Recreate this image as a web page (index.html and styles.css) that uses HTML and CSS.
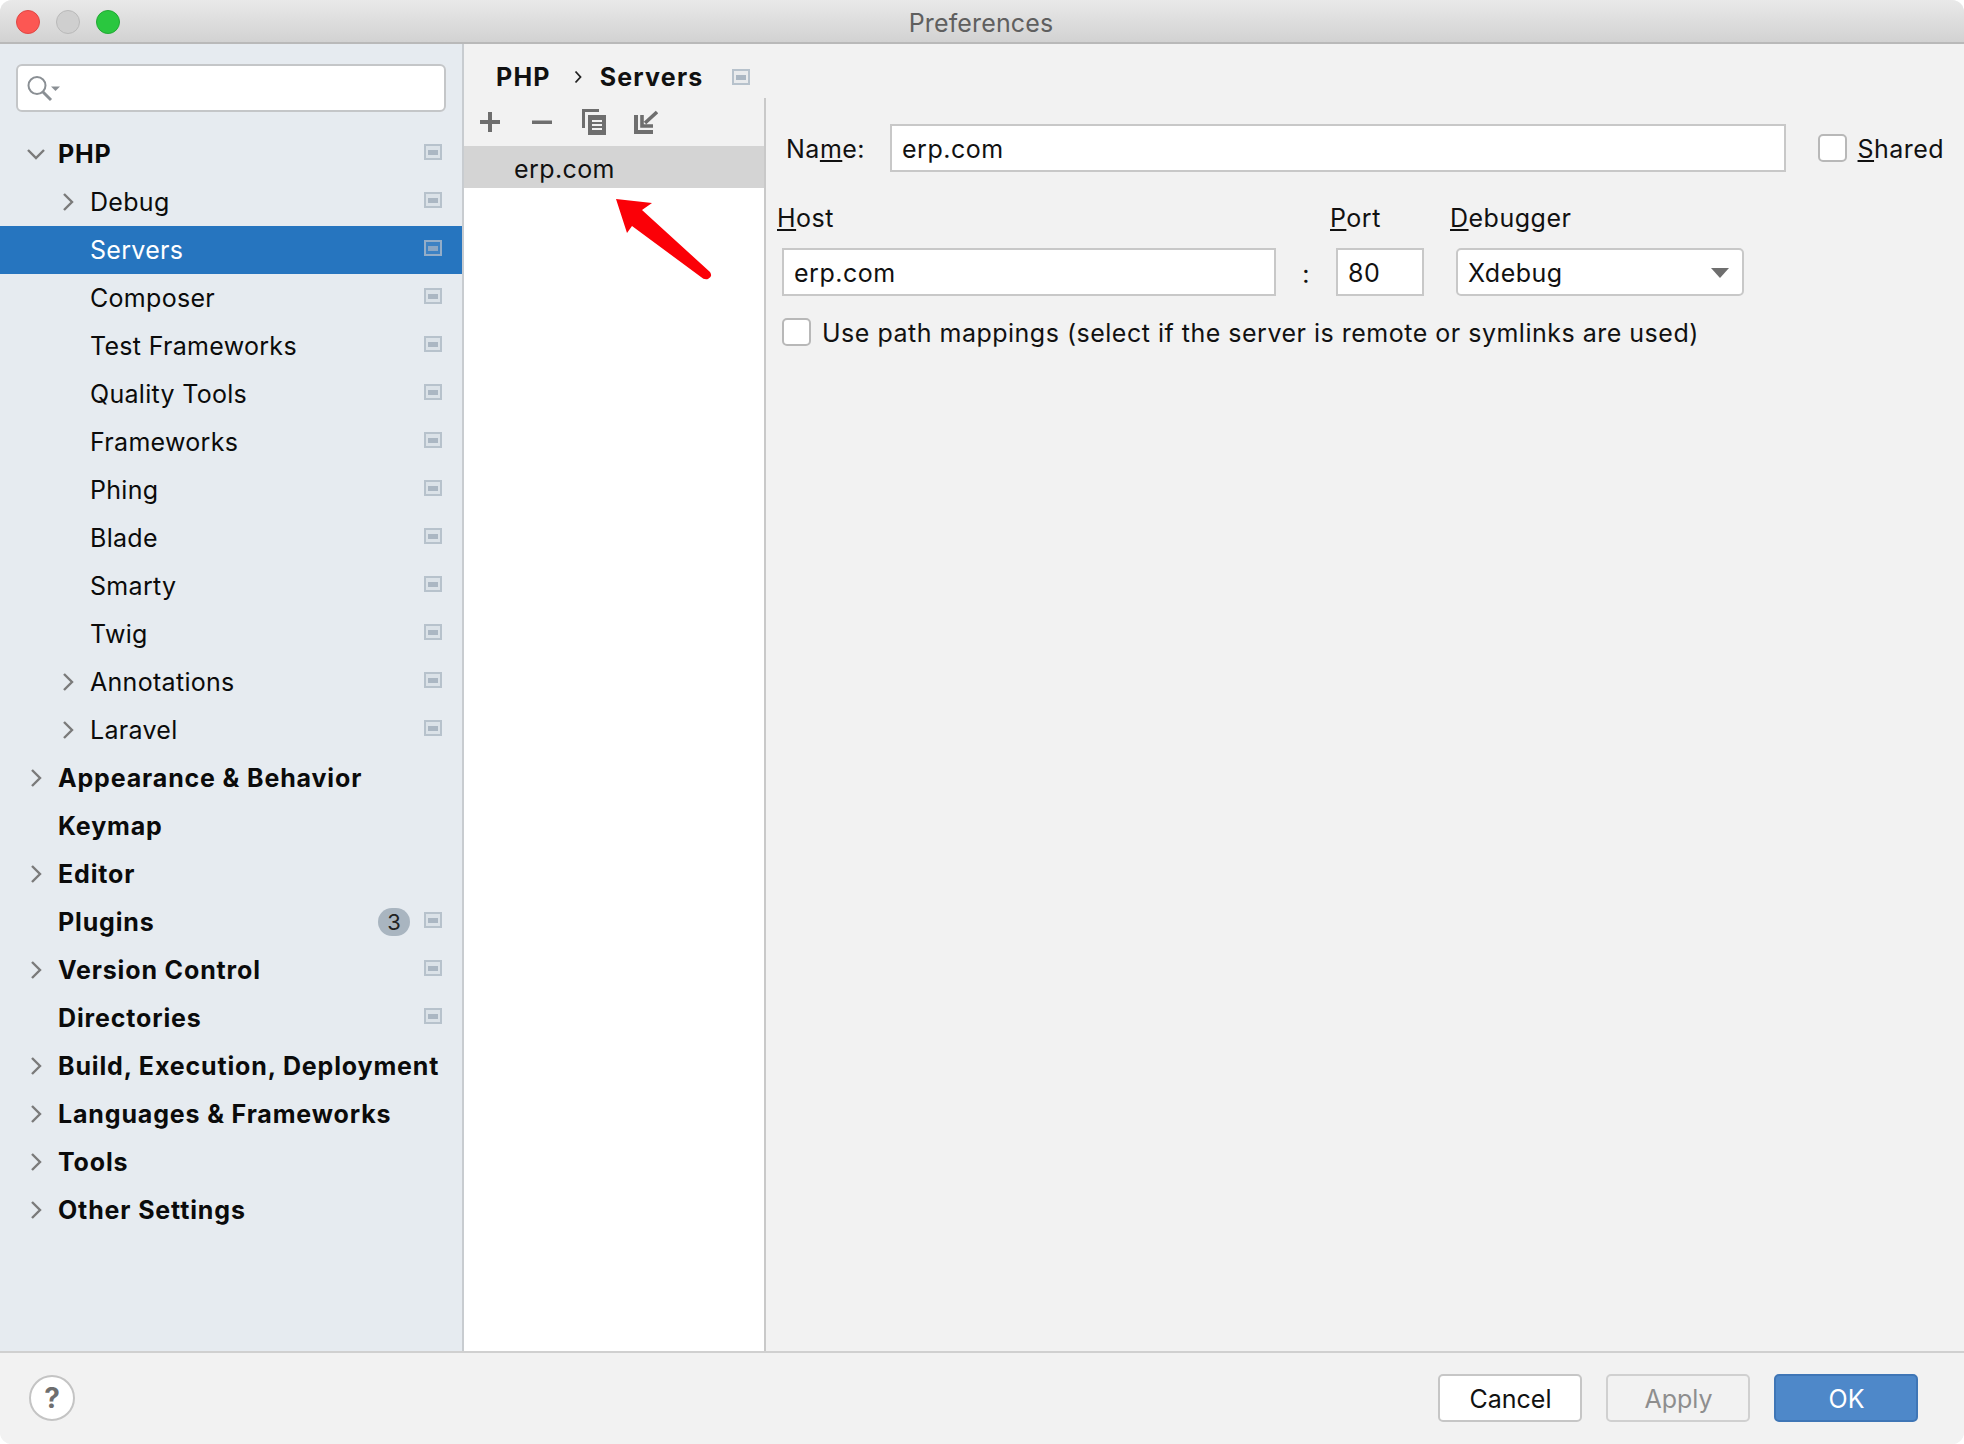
FILE: index.html
```html
<!DOCTYPE html>
<html lang="en">
<head>
<meta charset="utf-8">
<title>Preferences</title>
<link rel="stylesheet" href="styles.css">
</head>
<body>
<div class="window">
  <header class="titlebar">
    <div class="lights"><span class="light red"></span><span class="light grey"></span><span class="light green"></span></div>
    <div class="title">Preferences</div>
  </header>
  <div class="content">
    <aside class="sidebar">
      <div class="search">
        <svg class="search-icon" width="34" height="32" viewBox="0 0 34 32"><circle cx="10" cy="11.500" r="8.500" fill="none" stroke="#8a8f94" stroke-width="2"/><path d="M16 18l8 8" stroke="#8a8f94" stroke-width="3" fill="none"/><path d="M24 12.500h9l-4.500 4.500z" fill="#8a8f94"/></svg>
      </div>
      <nav class="tree">
        <div class="row top"><svg class="chev" viewBox="0 0 24 24"><path d="M4 8l8 8 8-8"/></svg><span class="label">PHP</span><i class="pi"></i></div>
        <div class="row sub"><svg class="chev" viewBox="0 0 24 24"><path d="M8 4l8 8-8 8"/></svg><span class="label">Debug</span><i class="pi"></i></div>
        <div class="row sub selected"><span class="chev"></span><span class="label">Servers</span><i class="pi"></i></div>
        <div class="row sub"><span class="chev"></span><span class="label">Composer</span><i class="pi"></i></div>
        <div class="row sub"><span class="chev"></span><span class="label">Test Frameworks</span><i class="pi"></i></div>
        <div class="row sub"><span class="chev"></span><span class="label">Quality Tools</span><i class="pi"></i></div>
        <div class="row sub"><span class="chev"></span><span class="label">Frameworks</span><i class="pi"></i></div>
        <div class="row sub"><span class="chev"></span><span class="label">Phing</span><i class="pi"></i></div>
        <div class="row sub"><span class="chev"></span><span class="label">Blade</span><i class="pi"></i></div>
        <div class="row sub"><span class="chev"></span><span class="label">Smarty</span><i class="pi"></i></div>
        <div class="row sub"><span class="chev"></span><span class="label">Twig</span><i class="pi"></i></div>
        <div class="row sub"><svg class="chev" viewBox="0 0 24 24"><path d="M8 4l8 8-8 8"/></svg><span class="label">Annotations</span><i class="pi"></i></div>
        <div class="row sub"><svg class="chev" viewBox="0 0 24 24"><path d="M8 4l8 8-8 8"/></svg><span class="label">Laravel</span><i class="pi"></i></div>
        <div class="row top"><svg class="chev" viewBox="0 0 24 24"><path d="M8 4l8 8-8 8"/></svg><span class="label">Appearance &amp; Behavior</span></div>
        <div class="row top"><span class="chev"></span><span class="label">Keymap</span></div>
        <div class="row top"><svg class="chev" viewBox="0 0 24 24"><path d="M8 4l8 8-8 8"/></svg><span class="label">Editor</span></div>
        <div class="row top"><span class="chev"></span><span class="label">Plugins</span><span class="badge">3</span><i class="pi"></i></div>
        <div class="row top"><svg class="chev" viewBox="0 0 24 24"><path d="M8 4l8 8-8 8"/></svg><span class="label">Version Control</span><i class="pi"></i></div>
        <div class="row top"><span class="chev"></span><span class="label">Directories</span><i class="pi"></i></div>
        <div class="row top"><svg class="chev" viewBox="0 0 24 24"><path d="M8 4l8 8-8 8"/></svg><span class="label">Build, Execution, Deployment</span></div>
        <div class="row top"><svg class="chev" viewBox="0 0 24 24"><path d="M8 4l8 8-8 8"/></svg><span class="label">Languages &amp; Frameworks</span></div>
        <div class="row top"><svg class="chev" viewBox="0 0 24 24"><path d="M8 4l8 8-8 8"/></svg><span class="label">Tools</span></div>
        <div class="row top"><svg class="chev" viewBox="0 0 24 24"><path d="M8 4l8 8-8 8"/></svg><span class="label">Other Settings</span></div>
      </nav>
    </aside>
    <main class="main">
      <div class="crumbs">
        <span class="crumb">PHP</span>
        <svg class="crumb-sep" width="8" height="14" viewBox="0 0 8 14"><path d="M1.500 1.500L6.500 7l-5 5.500" fill="none" stroke="#222" stroke-width="1.800"/></svg>
        <span class="crumb">Servers</span>
        <i class="pi crumb-pi"></i>
      </div>
      <div class="split">
        <section class="servers">
          <div class="toolbar">
            <svg class="tool" width="24" height="24" viewBox="0 0 24 24"><path d="M10 2h4v8h8v4h-8v8h-4v-8H2v-4h8z" fill="#6e6e6e"/></svg>
            <svg class="tool" width="24" height="24" viewBox="0 0 24 24"><path d="M2 10.500h20v3.500H2z" fill="#6e6e6e"/></svg>
            <svg class="tool" width="24" height="26" viewBox="0 0 24 26"><path d="M0 0h17v3H3v16H0z" fill="#6e6e6e"/><path d="M6 6h18v20H6z" fill="#6e6e6e"/><path d="M10 11h10v2H10zM10 15h10v2H10zM10 19h10v2H10z" fill="#f2f2f2"/></svg>
            <svg class="tool" width="24" height="24" viewBox="0 0 24 24"><path d="M0 5h4v15h15v4H0z" fill="#6e6e6e"/><path d="M23 2L11 13M8 5v11h11" fill="none" stroke="#6e6e6e" stroke-width="3.600"/></svg>
          </div>
          <div class="list">
            <div class="list-item">erp.com</div>
          </div>
        </section>
        <section class="form">
          <div class="name-row">
            <label class="name-label">Na<u>m</u>e:</label>
            <div class="field name-field">erp.com</div>
            <span class="check"></span>
            <label class="shared"><u>S</u>hared</label>
          </div>
          <div class="host-grid">
            <label><u>H</u>ost</label>
            <span></span>
            <label><u>P</u>ort</label>
            <label><u>D</u>ebugger</label>
            <div class="field host-field">erp.com</div>
            <span class="colon">:</span>
            <div class="field port-field">80</div>
            <div class="select"><span>Xdebug</span><svg width="18" height="12" viewBox="0 0 18 12"><path d="M0 1h18L9 11z" fill="#6e6e6e"/></svg></div>
          </div>
          <div class="mapping">
            <span class="check"></span>
            <label>Use path mappings (select if the server is remote or symlinks are used)</label>
          </div>
        </section>
      </div>
      <svg class="annotation" width="104" height="90" viewBox="0 0 104 90"><path d="M2 2L38 6 28 13 96 75Q99 80 94 82 90 83 87 80L18 29 13 36z" fill="#fb0007"/></svg>
    </main>
  </div>
  <footer class="footer">
    <button class="help">?</button>
    <div class="actions">
      <button class="btn">Cancel</button>
      <button class="btn disabled">Apply</button>
      <button class="btn primary">OK</button>
    </div>
  </footer>
</div>
</body>
</html>
```

FILE: styles.css
```css
* { box-sizing: border-box; }
html, body { margin: 0; padding: 0; background: #fff; }
body { width: 1964px; height: 1444px; overflow: hidden; font-family: Inter, "Liberation Sans", sans-serif; font-size: 25px; letter-spacing: 0.5px; color: #111; }
.window { width: 1964px; height: 1444px; display: flex; flex-direction: column; border-radius: 12px; overflow: hidden; background: #f2f2f2; }
.titlebar { height: 44px; flex: none; position: relative; display: flex; align-items: center; justify-content: center; padding-top: 3px; background: linear-gradient(#e9e9e9, #d2d2d2); border-bottom: 2px solid #b9b9b9; }
.lights { position: absolute; left: 16px; top: 10px; display: flex; gap: 16px; }
.light { width: 24px; height: 24px; border-radius: 50%; border: 1px solid; }
.red { background: #fc5753; border-color: #df4744; }
.grey { background: #cfcfcf; border-color: #b9b9b9; }
.green { background: #2ac73f; border-color: #22a834; }
.title { color: #5f5f5f; font-size: 25px; letter-spacing: 0.15px; margin-left: -2px; }
.content { flex: 1; display: flex; min-height: 0; }
.sidebar { width: 464px; flex: none; background: #e6ebf0; border-right: 2px solid #c8ccd0; padding-top: 20px; }
.search { height: 48px; margin: 0 16px; background: #fff; border: 2px solid #c4c6c8; border-radius: 6px; display: flex; align-items: center; padding: 3px 0 0 9px; width: 430px; }
.tree { margin-top: 18px; }
.row { height: 48px; display: flex; align-items: center; padding-right: 20px; color: #0b0b0b; }
.row.top { padding-left: 25px; font-weight: 700; letter-spacing: 0.85px; }
.row.top .chev { margin-left: -1px; }
.row.sub { padding-left: 56px; letter-spacing: 0.3px; }
.row.selected { background: #2675bf; color: #fff; }
.chev { width: 24px; height: 24px; margin-right: 10px; flex: none; fill: none; stroke: #7a7a7a; stroke-width: 2.4; }
.label { flex: 1; white-space: nowrap; }
.pi { width: 18px; height: 16px; flex: none; margin-bottom: 4px; border: 2px solid #b7c2cc; display: flex; padding: 4px 2px 3px; background: #dbe2e8; background-clip: padding-box; }
.pi::before { content: ""; flex: 1; background: #abb7c3; }
.selected .pi { border-color: #93adc8; background: #3d82c4; background-clip: padding-box; }
.selected .pi::before { background: #8aa6c4; }
.badge { width: 32px; height: 28px; border-radius: 14px; background: #a9b5c0; color: #222; font-size: 22px; font-weight: 400; letter-spacing: 0; display: flex; align-items: center; justify-content: center; margin-right: 14px; }
.main { flex: 1; display: flex; flex-direction: column; min-width: 0; position: relative; }
.crumbs { height: 54px; flex: none; display: flex; align-items: center; padding: 12px 0 0 32px; font-weight: 700; letter-spacing: 1.2px; }
.crumb-sep { margin: 0 18px 0 23px; }
.crumb-pi { margin: 0 0 0 28px; background: #e9ebed; background-clip: padding-box; }
.split { flex: 1; display: flex; min-height: 0; }
.servers { width: 302px; flex: none; display: flex; flex-direction: column; border-right: 2px solid #c9c9c9; }
.toolbar { height: 48px; flex: none; display: flex; align-items: center; padding-left: 14px; gap: 28px; }
.list { flex: 1; background: #fff; }
.list-item { height: 42px; background: #d4d4d4; padding: 3px 0 0 50px; display: flex; align-items: center; letter-spacing: 0.4px; }
.form { flex: 1; min-width: 0; padding: 26px 20px 0 0; }
.name-row { display: flex; align-items: center; height: 48px; padding-left: 20px; }
.name-label { width: 104px; flex: none; padding-top: 2px; }
.field { background: #fff; border: 2px solid #c8c8c8; height: 48px; display: flex; align-items: center; padding: 2px 0 0 10px; }
.name-field { flex: 1; margin-right: 32px; }
.check { width: 29px; height: 28px; flex: none; background: #fff; border: 2px solid #b8b8b8; border-radius: 5px; }
.shared { margin-left: 11px; padding-top: 2px; letter-spacing: 0.45px; }
.host-grid { display: grid; grid-template-columns: 499px 54px 120px 294px; grid-template-rows: 32px 48px; row-gap: 12px; margin: 32px 0 0 11px; }
.host-grid label { align-self: center; padding-bottom: 5px; }
.host-field { margin-left: 5px; }
.colon { display: flex; align-items: center; justify-content: center; padding: 4px 0 0 6px; }
.port-field { margin-left: 6px; width: 88px; }
.select { margin-left: 6px; background: #fff; border: 2px solid #c8c8c8; border-radius: 5px; display: flex; align-items: center; justify-content: space-between; padding: 2px 13px 0 10px; height: 48px; }
.mapping { display: flex; align-items: center; gap: 11px; margin: 21px 0 0 16px; height: 30px; white-space: nowrap; }
.mapping label { padding-top: 2px; }
.annotation { position: absolute; left: 150px; top: 153px; }
.footer { height: 93px; flex: none; display: flex; align-items: flex-start; justify-content: space-between; border-top: 2px solid #d0d0d0; padding: 21px 46px 0 29px; background: #f2f2f2; }
.help { width: 46px; height: 46px; border-radius: 50%; margin-top: 1px; background: #fff; border: 2px solid #c4c4c4; color: #6e6e6e; font: 700 28px Inter, "Liberation Sans", sans-serif; padding: 0; }
.actions { display: flex; gap: 24px; }
.btn { width: 144px; height: 48px; background: #fff; border: 2px solid #c6c6c6; border-radius: 5px; color: #111; font: 400 25px Inter, "Liberation Sans", sans-serif; padding: 2px 0 0 1px; }
.btn.disabled { background: #f2f2f2; border-color: #d0d0d0; color: #8e8e8e; }
.btn.primary { background: #4e88c9; border-color: #3f76b6; color: #fff; }
```
